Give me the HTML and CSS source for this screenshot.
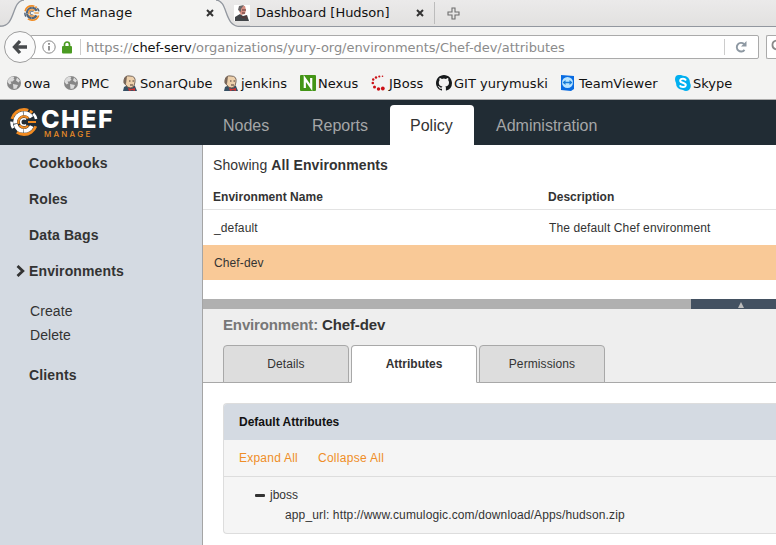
FILE: index.html
```html
<!DOCTYPE html>
<html lang="en">
<head>
<meta charset="utf-8">
<title>Chef Manage</title>
<link rel="stylesheet" href="styles.css">
</head>
<body>
<svg class="defs" width="0" height="0">
  <symbol id="globe" viewBox="0 0 16 16">
    <circle cx="8" cy="8" r="7" fill="#868686"/>
    <path d="M1.500 7l1-3 3-2.500 3 .2-1 1.800 1 1-2 2-2 0 1 2-2 1zM11 2.500l3 3-1.500 2-2.500-2zM7 9l5 1-1.500 3.500-3 .5z" fill="#dcdcdc"/>
  </symbol>
  <symbol id="butler" viewBox="0 0 16 16">
    <path d="M1 16l1-4 4-2 7 1 2 5z" fill="#365064"/>
    <path d="M2 5Q3 0 8 1Q14 1 13 7Q13 12 9 13Q5 13 4 10Q1 9 2 5z" fill="#edd0ac" stroke="#5c4b43" stroke-width=".8"/>
    <path d="M2 5Q3 1 5 1L4.500 5 4 9Q1 9 2 5z" fill="#77665a"/>
    <path d="M7 6h1.500m2 0h1.500M8 10h3" stroke="#4b3934"/>
    <path d="M6 13l3 1 4-1v3l-3-1-3 1z" fill="#cf3434"/>
  </symbol>
  <symbol id="chef" viewBox="0 0 28 28">
    <g fill="none">
      <circle cx="14" cy="14" r="12.500" pathLength="360" stroke="#f18b21" stroke-width="2.800" stroke-dasharray="0 20 105 70 95 8 14 48"/>
      <circle cx="14" cy="14" r="12.500" pathLength="360" stroke="currentColor" stroke-width="2.600" stroke-dasharray="0 150 32 136 28 14"/>
      <circle cx="14" cy="14" r="8.800" pathLength="360" stroke="currentColor" stroke-width="4" stroke-dasharray="0 28 62 3 72 5 93 4 61 32"/>
      <circle cx="14" cy="14" r="5.600" pathLength="360" stroke="#f18b21" stroke-width="2.200" stroke-dasharray="0 40 105 15 160 40"/>
      <circle cx="14" cy="14" r="3.300" pathLength="360" stroke="currentColor" stroke-width="1.600" stroke-dasharray="0 50 260 50"/>
      <path d="M18 14h8" stroke="#f18b21" stroke-width="2"/>
    </g>
  </symbol>
</svg>
<div class="tabs">
  <svg class="tabshape" viewBox="0 0 250 27"><path d="M0 26.500C18 27 11 0 24 0H216C229 0 222 27 241 26.500V27H0z" fill="#f3f3f2"/><path d="M0 26C16 27 11 1 24 0M216 0C229 1 223 27 241 26.500H250" fill="none" stroke="#92979f" stroke-width="1.300"/></svg>
  <svg class="favicon"><use href="#chef"/></svg>
  <span class="tabname first">Chef Manage</span>
  <svg class="close" viewBox="0 0 8 8"><path d="M1 1l6 6M7 1L1 7"/></svg>
  <svg class="hudson" viewBox="0 0 16 16"><path fill="#fff" d="M0 0h16v16H0z"/><path d="M1 16v-4l5-3 3 2 4-1 2 6z" fill="#424549"/><path d="M5 3q1-3 6-2l1 4-1 4-4 1-2-4z" fill="#d58f83"/><path d="M4 5l1-4 5-1-3 4v3z" fill="#6a6769"/><path d="M8 5h4M8 8h3M7 11l2 2 3-2v3" fill="none" stroke="#5b3434"/></svg>
  <span class="tabname second">Dashboard [Hudson]</span>
  <svg class="close" viewBox="0 0 8 8"><path d="M1 1l6 6M7 1L1 7"/></svg>
  <i class="tabsep"></i>
  <svg class="plus" viewBox="0 0 13 13"><path d="M5 1h3v4h4v3H8v4H5V8H1V5h4z"/></svg>
</div>
<div class="toolbar">
  <div class="back"><svg width="16" height="16" viewBox="0 0 16 16"><path d="M8 2L2.500 8 8 14M3 8h12" fill="none" stroke="#474a4c" stroke-width="3.300"/></svg></div>
  <div class="url">
    <svg class="info" viewBox="0 0 14 14"><circle cx="7" cy="7" r="6.200" fill="none" stroke="#888"/><path d="M7 6v4.500M7 3v1.700" stroke="#777" stroke-width="1.600"/></svg>
    <svg class="lock" viewBox="0 0 10 13"><path d="M2.500 7V3.500a2.500 2.500 0 0 1 5 0V7" fill="none" stroke="#4b9b22" stroke-width="1.700"/><rect y="5" width="10" height="7.500" rx="1" fill="#4b9b22"/></svg>
    <i class="urlsep"></i>
    <span class="address">https://<b>chef-serv</b>/organizations/yury-org/environments/Chef-dev/attributes</span>
    <i class="urlsep"></i>
    <svg class="reload" viewBox="0 0 12 12"><path d="M9.500 8.800A4.300 4.300 0 1 1 9 3" fill="none" stroke="#8d98a2" stroke-width="1.900"/><path d="M11.500 0v5.500H6z" fill="#8d98a2"/></svg>
  </div>
  <div class="search"><svg width="5" height="16" viewBox="0 0 5 16"><path d="M5 1.600A4.500 4.500 0 0 0 5 10.400" fill="none" stroke="#888" stroke-width="1.800"/></svg></div>
</div>
<nav class="bookmarks">
  <a class="owa"><svg><use href="#globe"/></svg><span>owa</span></a>
  <a class="pmc"><svg><use href="#globe"/></svg><span>PMC</span></a>
  <a class="sonar"><svg><use href="#butler"/></svg><span>SonarQube</span></a>
  <a class="jenkins"><svg><use href="#butler"/></svg><span>jenkins</span></a>
  <a class="nexus"><svg viewBox="0 0 16 16"><rect width="16" height="16" rx="1" fill="#439516"/><path d="M4.800 13V3.500L11.200 12.500V3" fill="none" stroke="#fff" stroke-width="2.200"/></svg><span>Nexus</span></a>
  <a class="jboss"><svg viewBox="0 0 16 16" fill="#cc1016"><circle cx="11.500" cy="1.300" r=".8"/><circle cx="8.300" cy="1.500" r="1.100"/><circle cx="5" cy="2.500" r="1.200"/><circle cx="2.200" cy="4.500" r="1.200"/><circle cx="1.800" cy="8" r="1.300"/><circle cx="3.500" cy="12" r="1.500"/><circle cx="7.500" cy="14" r="1.700"/><circle cx="11.800" cy="13.500" r="1.900"/></svg><span>JBoss</span></a>
  <a class="git"><svg viewBox="0 0 16 16"><path fill="#171a1c" d="M8 0C3.600 0 0 3.600 0 8c0 3.500 2.300 6.500 5.500 7.600.4.100.5-.2.5-.4v-1.500c-2 .4-2.700-.5-2.900-1-.1-.3-.5-1-.9-1.200-.3-.1-.7-.6 0-.6.6 0 1.100.6 1.300.8.7 1.200 1.900.9 2.400.7.1-.5.3-.9.5-1.100C4.600 11.100 2.800 10.400 2.800 7.400c0-.9.3-1.600.8-2.200-.1-.2-.4-1 .1-2.100 0 0 .7-.2 2.200.8a7.500 7.500 0 0 1 4 0c1.500-1 2.200-.8 2.200-.8.5 1.100.2 1.900.1 2.100.5.600.8 1.300.8 2.200 0 3.100-1.900 3.700-3.700 3.900.3.300.6.800.6 1.500v2.400c0 .2.1.5.5.4A8 8 0 0 0 16 8c0-4.400-3.600-8-8-8z"/></svg><span>GIT yurymuski</span></a>
  <a class="team"><svg viewBox="0 0 14 16"><path d="M0 0l13 1v13l-3 2-10-1z" fill="#086be2"/><circle cx="6.500" cy="7.500" r="5.500" fill="#b9e4ff"/><path d="M1.500 7.500l3-2.500v1.700h4V5l3 2.500-3 2.500V8.300h-4V10z" fill="#167bd8"/></svg><span>TeamViewer</span></a>
  <a class="skype"><svg viewBox="0 0 16 16"><path d="M1 1Q4-1 8 .7Q15 1 15 8Q17 12 14 15Q11 17 8 15Q1 14 1 8Q-1 4 1 1z" fill="#00aff0"/><path d="M11 5.500Q9.800 3.500 7.500 3.800Q5 4 5.200 6C5.500 8 10.800 7.500 10.800 10C10.500 13 5.700 12.500 4.800 10.300" fill="none" stroke="#fff" stroke-width="2"/></svg><span>Skype</span></a>
</nav>
<header>
  <svg class="logo" viewBox="0 0 28 28"><use href="#chef"/></svg>
  <div class="brand"><strong>CHEF</strong><span>MANAGE</span></div>
  <nav class="menu"><a class="nodes">Nodes</a><a class="reports">Reports</a><a class="policy">Policy</a><a class="admin">Administration</a></nav>
</header>
<div class="content">
  <aside>
    <a class="cook">Cookbooks</a><a>Roles</a><a>Data Bags</a>
    <a class="current"><svg width="9" height="12" viewBox="0 0 9 12"><path d="M1.500 1l5.300 5-5.300 5" fill="none" stroke="#333" stroke-width="2.800"/></svg>Environments</a>
    <div class="sub"><span>Create</span><span>Delete</span></div>
    <a>Clients</a>
  </aside>
  <main>
    <div class="showing">Showing <b>All Environments</b></div>
    <div class="row head"><span>Environment Name</span><span>Description</span></div>
    <div class="row def"><span>_default</span><span>The default Chef environment</span></div>
    <div class="row selected"><span>Chef-dev</span></div>
    <div class="splitter"><div><svg width="6" height="6" viewBox="0 0 6 6"><path d="M3 0l3 6H0z" fill="#bbb"/></svg></div></div>
    <section class="detail">
      <h1>Environment: <b>Chef-dev</b></h1>
      <div class="subtabs"><a>Details</a><a class="on">Attributes</a><a>Permissions</a></div>
    </section>
    <section class="panel">
      <h2><span>Default Attributes</span></h2>
      <div class="actions"><a class="expand">Expand All</a><a class="collapse">Collapse All</a></div>
      <div class="tree"><div class="branch"><i></i><span>jboss</span></div><div class="leaf"><span>app_url: http://www.cumulogic.com/download/Apps/hudson.zip</span></div></div>
    </section>
  </main>
</div>
</body>
</html>
```
FILE: styles.css
```css
* { box-sizing: border-box; }
body { margin: 0; width: 776px; height: 545px; overflow: hidden; background: #fff; color: #333; font-family: "Liberation Sans", Arial, sans-serif; }
svg { display: block; flex: none; }
.defs { position: absolute; }

.tabs, .toolbar, .bookmarks { font-family: "DejaVu Sans", sans-serif; font-size: 13px; color: #111; }
.tabs { position: relative; display: flex; align-items: center; height: 27px; background: linear-gradient(#ebeaea, #e2e1e0); border-bottom: 1px solid #92979f; white-space: nowrap; }
.tabshape { position: absolute; left: 0; top: 0; width: 250px; height: 27px; }
.tabs > :not(.tabshape) { position: relative; flex: none; }
.favicon { width: 16px; height: 16px; margin-left: 24px; color: #53657a; }
.tabname { width: 160px; margin-left: 6px; padding-bottom: 1px; line-height: 20px; }
.first { letter-spacing: .05px; }
.second { letter-spacing: -.03px; }
.close { width: 8px; height: 8px; fill: none; stroke: #333; stroke-width: 2; }
.hudson { width: 16px; height: 16px; margin-left: 20px; }
.tabsep { width: 1px; height: 22px; margin-left: 10px; background: #bcbcbc; }
.plus { width: 13px; height: 13px; margin-left: 12px; fill: none; stroke: #6d6d6d; stroke-width: 1.1; }

.toolbar { display: flex; align-items: center; height: 40px; background: #f3f3f2; }
.back { position: relative; z-index: 1; display: flex; flex: none; align-items: center; justify-content: center; width: 32px; height: 32px; margin-left: 4px; border: 1px solid #9d9d9d; border-radius: 50%; background: #fafafa; }
.url { display: flex; flex: none; align-items: center; width: 729px; height: 24px; margin-left: -6px; padding-left: 11px; border: 1px solid #aaa; border-radius: 2px; background: #fff; }
.info { width: 14px; height: 14px; }
.lock { width: 10px; height: 13px; margin-left: 6px; }
.urlsep { width: 1px; height: 16px; margin-left: 8px; background: #ccc; }
.address { flex: 1; margin-left: 5px; color: #8b8b8b; white-space: nowrap; letter-spacing: -.04px; }
.address b { font-weight: normal; color: #111; }
.reload { width: 12px; height: 12px; margin: 0 11px 0 10px; }
.search { width: 10px; height: 24px; flex: none; margin-left: 7px; padding: 3px 0 3px 4px; border: 1px solid #aaa; border-right: 0; border-radius: 2px 0 0 2px; background: #fff; }
.bookmarks { display: flex; align-items: center; height: 33px; padding-left: 6px; background: #f3f3f2; border-bottom: 1px solid #aaa; white-space: nowrap; }
.bookmarks a { display: flex; align-items: center; flex: none; }
.bookmarks svg { width: 16px; height: 16px; margin-right: 2px; }
.owa { width: 57px; }
.pmc { width: 59px; }
.sonar { width: 101px; }
.jenkins { width: 77px; }
.nexus { width: 71px; }
.jboss { width: 65px; }
.git { width: 125px; }
.team { width: 114px; }
.bookmarks .team svg { width: 14px; margin-right: 4px; }

header { display: flex; height: 45px; background: #212c34; }
.logo { width: 28px; height: 28px; margin: 8px 0 0 10px; color: #fff; }
.brand { display: flex; flex-direction: column; width: 158px; margin-left: 2px; padding-top: 8px; color: #fff; }
.brand strong { height: 22px; padding-left: 1px; font: 800 25px/22px Inter, sans-serif; letter-spacing: 1.5px; }
.brand span { padding-left: 4px; font: 500 8px/8px Inter, sans-serif; letter-spacing: 2.2px; color: #e78a27; }
.menu { display: flex; align-items: end; margin-left: 1px; font-size: 16px; color: #a5a6a7; }
.menu a { height: 40px; line-height: 42px; white-space: nowrap; }
.nodes { width: 89px; margin-left: 24px; }
.reports { width: 78px; }
.policy { width: 84px; padding-left: 20px; border-radius: 4px 4px 0 0; background: #fff; color: #333; }
.admin { margin-left: 22px; }

.content { display: flex; height: 400px; }
aside { width: 203px; background: #d4dae2; border-right: 1px solid #a5a5a5; font-size: 14px; }
aside > a { display: flex; align-items: center; height: 36px; padding-left: 29px; font-weight: bold; letter-spacing: .13px; }
aside > .cook { letter-spacing: .3px; }
aside .current { padding-left: 16px; }
.current svg { margin-right: 4px; }
.sub { display: flex; flex-direction: column; height: 68px; padding: 10px 0 0 30px; line-height: 24px; letter-spacing: .08px; }

main { width: 573px; }
.showing { height: 34px; padding: 2px 0 0 10px; font-size: 14px; line-height: 36px; letter-spacing: .09px; }
.row { display: grid; grid-template-columns: 335px auto; align-items: center; padding-left: 10px; font-size: 12px; }
.head { height: 31px; padding-top: 6px; border-bottom: 1px solid #e3e3e3; font-weight: bold; letter-spacing: .03px; }
.def { height: 35px; padding-left: 11px; letter-spacing: .12px; }
.selected { height: 35px; padding-left: 11px; background: #f9c997; letter-spacing: .12px; }
.splitter { display: flex; justify-content: end; height: 10px; margin-top: 19px; background: #b0b0b0; }
.splitter div { width: 85px; padding: 3px 0 0 47px; background: #435161; }
.detail { height: 74px; background: #eee; border-bottom: 1px solid #a8a8a8; }
h1 { height: 36px; margin: 0; padding-left: 20px; font-size: 15px; line-height: 32px; letter-spacing: -.14px; color: #777; }
h1 b { color: #333; }
.subtabs { display: flex; gap: 2px; padding-left: 20px; }
.subtabs a { width: 126px; height: 38px; border: 1px solid #a8a8a8; border-radius: 4px 4px 0 0; background: #ddd; font-size: 12px; line-height: 36px; letter-spacing: .1px; text-align: center; }
.subtabs .on { background: #fff; border-bottom-color: #fff; font-weight: bold; letter-spacing: 0; }
.panel { height: 131px; margin: 20px 0 0 20px; border: 1px solid #ddd; border-right: 0; border-radius: 4px 0 0 4px; background: #f5f5f5; font-size: 12px; }
h2 { height: 36px; margin: 0; padding-left: 15px; border-radius: 3px 0 0; background: #d4dae2; color: #111; font-size: 12px; line-height: 36px; }
.actions { display: flex; gap: 20px; height: 37px; padding-left: 15px; border-bottom: 1px solid #ddd; line-height: 36px; color: #ef8e27; }
.expand { letter-spacing: .22px; }
.collapse { letter-spacing: .3px; }
.tree { padding-top: 8px; line-height: 20px; }
.branch { display: flex; align-items: center; padding-left: 31px; }
.branch i { width: 10px; height: 3px; margin-right: 5px; border-radius: 1px; background: #333; }
.leaf { padding-left: 61px; letter-spacing: .13px; }
```
